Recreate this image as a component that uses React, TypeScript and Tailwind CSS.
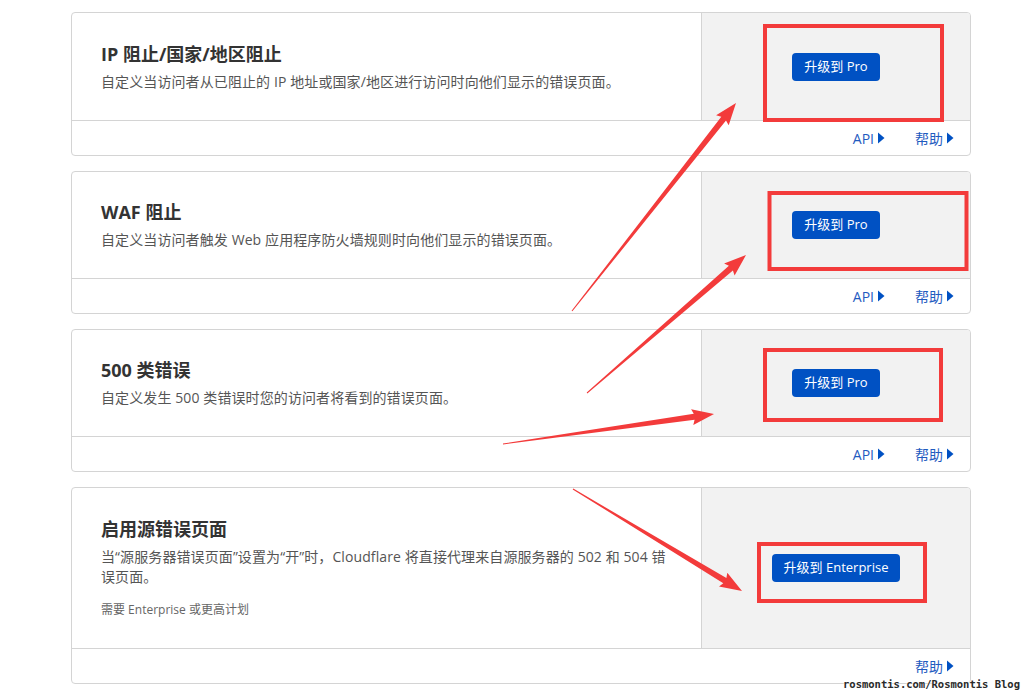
import React from "react";

const FONT = '"Open Sans", "Noto Sans CJK SC", sans-serif';

function Tri() {
  return (
    <svg width="8" height="12" viewBox="0 0 8 12" className="ml-[3px] inline-block">
      <path d="M1 0.5 L7.5 6 L1 11.5 Z" fill="#0051c3" />
    </svg>
  );
}

function FooterLink({ label }: { label: string }) {
  return (
    <span className="flex items-center text-[14px] text-[#1f5bbf]">
      {label}
      <Tri />
    </span>
  );
}

type CardProps = {
  title: string;
  desc: React.ReactNode;
  note?: string;
  button: string;
  mainH: string;
  api?: boolean;
};

function Card({ title, desc, note, button, mainH, api = true }: CardProps) {
  return (
    <div className="w-[900px] rounded-[4px] border border-[#d4d4d4] bg-white overflow-hidden">
      <div className={`flex ${mainH}`}>
        <div className="flex flex-1 flex-col justify-center pl-[29px] pr-[28px]">
          <div className="text-[18px] font-bold leading-[24px] text-[#333333]">{title}</div>
          <div className="mt-[6px] text-[14px] leading-[20px] tracking-[0.1px] text-[#555555]">{desc}</div>
          {note && <div className="mt-[13px] text-[12px] leading-[20px] text-[#666666]">{note}</div>}
        </div>
        <div className="flex w-[269px] items-center justify-center border-l border-[#d4d4d4] bg-[#f2f2f2]">
          <button className="h-[28px] rounded-[4px] bg-[#0051c3] px-[12px] text-[13px] text-white">
            {button}
          </button>
        </div>
      </div>
      <div className="flex h-[35px] items-center justify-end gap-[30px] border-t border-[#d4d4d4] pr-[16px]">
        {api && <FooterLink label="API" />}
        <FooterLink label="帮助" />
      </div>
    </div>
  );
}

function arrowPoints(tx: number, ty: number, hx: number, hy: number) {
  const dx = hx - tx;
  const dy = hy - ty;
  const len = Math.sqrt(dx * dx + dy * dy);
  const ux = dx / len;
  const uy = dy / len;
  const px = -uy;
  const py = ux;
  const headLen = 20;
  const headW = 8;
  const shaftW = 3;
  const bx = hx - ux * headLen;
  const by = hy - uy * headLen;
  const pts = [
    [tx + px * 0.5, ty + py * 0.5],
    [bx + px * shaftW, by + py * shaftW],
    [bx + px * headW - ux * 2, by + py * headW - uy * 2],
    [hx, hy],
    [bx - px * headW - ux * 2, by - py * headW - uy * 2],
    [bx - px * shaftW, by - py * shaftW],
    [tx - px * 0.5, ty - py * 0.5],
  ];
  return pts.map((p) => `${p[0].toFixed(1)},${p[1].toFixed(1)}`).join(" ");
}

function Overlay() {
  const red = "#f33b3b";
  const arrows = [
    [572, 311, 736, 103],
    [587, 393, 746, 255],
    [503, 444, 714, 414],
    [573, 489, 742, 591],
  ];
  return (
    <svg
      className="pointer-events-none absolute left-0 top-0"
      width="1024"
      height="697"
      viewBox="0 0 1024 697"
    >
      <rect x="765" y="26" width="177" height="94" fill="none" stroke={red} strokeWidth="4" />
      <rect x="769.5" y="193" width="197" height="76" fill="none" stroke={red} strokeWidth="4" />
      <rect x="765" y="350" width="176" height="70" fill="none" stroke={red} strokeWidth="4" />
      <rect x="759" y="544" width="166" height="57" fill="none" stroke={red} strokeWidth="4" />
      {arrows.map((a, i) => (
        <polygon key={i} points={arrowPoints(a[0], a[1], a[2], a[3])} fill={red} />
      ))}
    </svg>
  );
}

export default function App() {
  return (
    <div
      className="relative h-[697px] w-[1024px] overflow-hidden bg-white"
      style={{ fontFamily: FONT }}
    >
      <div className="flex flex-col gap-[15px] pl-[71px] pt-[12px]">
        <Card
          title="IP 阻止/国家/地区阻止"
          desc="自定义当访问者从已阻止的 IP 地址或国家/地区进行访问时向他们显示的错误页面。"
          button="升级到 Pro"
          mainH="h-[107px]"
        />
        <Card
          title="WAF 阻止"
          desc="自定义当访问者触发 Web 应用程序防火墙规则时向他们显示的错误页面。"
          button="升级到 Pro"
          mainH="h-[106px]"
        />
        <Card
          title="500 类错误"
          desc="自定义发生 500 类错误时您的访问者将看到的错误页面。"
          button="升级到 Pro"
          mainH="h-[106px]"
        />
        <Card
          title="启用源错误页面"
          desc={
            <>
              当“源服务器错误页面”设置为“开”时，Cloudflare 将直接代理来自源服务器的 502 和 504 错
              <br />
              误页面。
            </>
          }
          note="需要 Enterprise 或更高计划"
          button="升级到 Enterprise"
          mainH="h-[160px]"
          api={false}
        />
      </div>
      <Overlay />
      <div
        className="absolute left-[843px] top-[677px] text-[10.5px] font-bold leading-[14px] text-[#2a2a2a]"
        style={{ fontFamily: '"DejaVu Sans Mono", monospace', textShadow: "0 0 2px #fff, 0 0 2px #fff" }}
      >
        rosmontis.com/Rosmontis Blog
      </div>
    </div>
  );
}
